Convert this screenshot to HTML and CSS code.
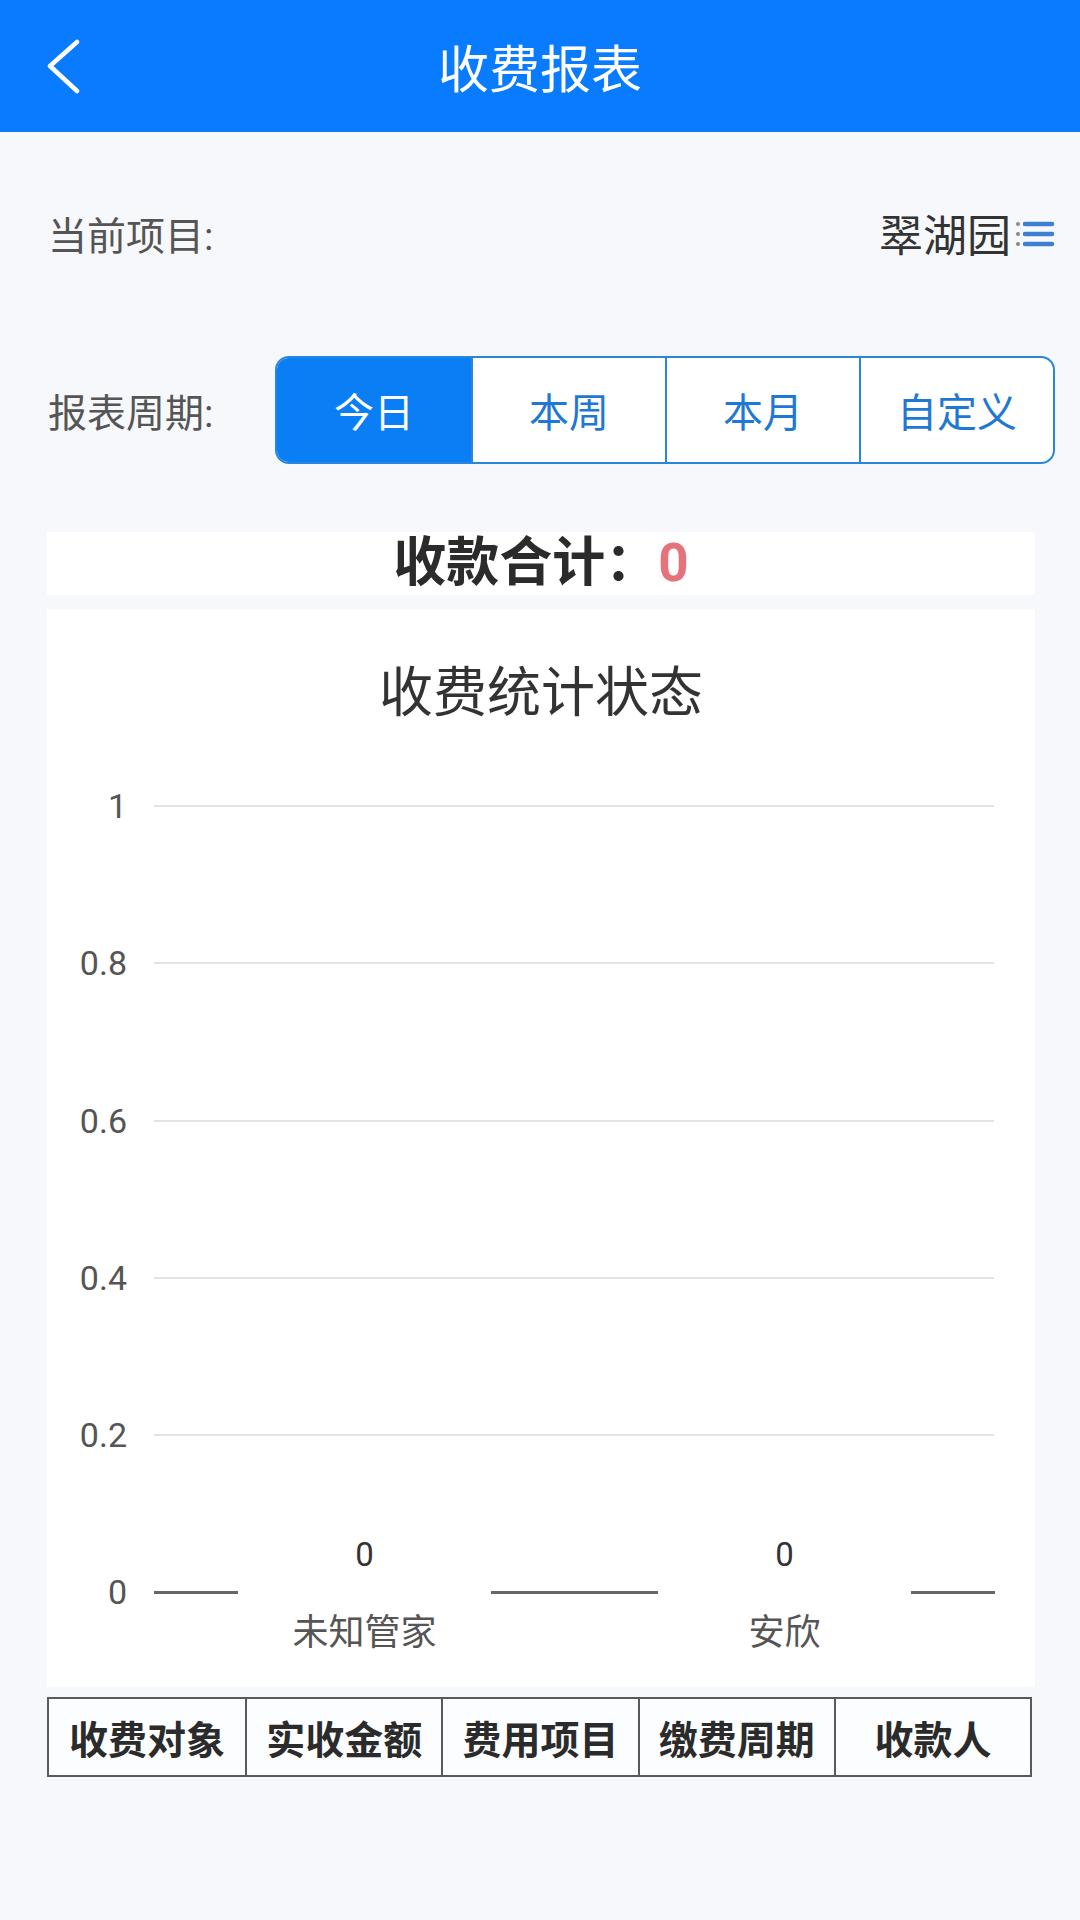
FILE: index.html
```html
<!DOCTYPE html>
<html lang="zh-CN">
<head>
    <meta charset="UTF-8">
    <meta name="viewport" content="width=device-width, initial-scale=1.0">
    <title>收费报表</title>
    <link rel="stylesheet" href="styles.css">
</head>
<body>
    <div class="header">
        <div class="back">
            <svg width="34" height="56" viewBox="0 0 34 56"><polyline points="30,3 3,27 30,52" fill="none" stroke="#fff" stroke-width="4.5" stroke-linecap="round" stroke-linejoin="round"/></svg>
        </div>
        <div class="title">收费报表</div>
        <div class="spacer"></div>
    </div>

    <div class="row project-row">
        <span class="label">当前项目:</span>
        <span class="project">翠湖园
            <svg class="menu-icon" width="40" height="28" viewBox="0 0 40 28"><circle cx="3" cy="4" r="2" fill="#888"/><circle cx="3" cy="14" r="2" fill="#888"/><circle cx="3" cy="24" r="2" fill="#888"/><line x1="10" y1="4" x2="37" y2="4" stroke="#3d7fd0" stroke-width="4.5" stroke-linecap="round"/><line x1="10" y1="14" x2="37" y2="14" stroke="#3d7fd0" stroke-width="4.5" stroke-linecap="round"/><line x1="10" y1="24" x2="37" y2="24" stroke="#3d7fd0" stroke-width="4.5" stroke-linecap="round"/></svg>
        </span>
    </div>

    <div class="row period-row">
        <span class="label">报表周期:</span>
        <div class="segments">
            <div class="seg active">今日</div>
            <div class="seg">本周</div>
            <div class="seg">本月</div>
            <div class="seg">自定义</div>
        </div>
    </div>

    <div class="summary">收款合计：<span class="total">0</span></div>

    <div class="chart">
        <div class="chart-title">收费统计状态</div>
        <div class="grid-row"><span class="ylabel">1</span><div class="gridline"></div></div>
        <div class="grid-row"><span class="ylabel">0.8</span><div class="gridline"></div></div>
        <div class="grid-row"><span class="ylabel">0.6</span><div class="gridline"></div></div>
        <div class="grid-row"><span class="ylabel">0.4</span><div class="gridline"></div></div>
        <div class="grid-row"><span class="ylabel">0.2</span><div class="gridline"></div></div>
        <div class="base-row">
            <span class="ylabel">0</span>
            <div class="axis">
                <div class="axis-seg edge"></div>
                <div class="bar-slot"><span class="value">0</span><span class="cat">未知管家</span></div>
                <div class="axis-seg middle"></div>
                <div class="bar-slot"><span class="value">0</span><span class="cat">安欣</span></div>
                <div class="axis-seg edge"></div>
            </div>
        </div>
    </div>

    <div class="table-head">
        <div class="th">收费对象</div>
        <div class="th">实收金额</div>
        <div class="th">费用项目</div>
        <div class="th">缴费周期</div>
        <div class="th">收款人</div>
    </div>
</body>
</html>
```

FILE: styles.css
```css
body {
    margin: 0;
    width: 1080px;
    min-height: 1920px;
    background: #f6f8fb;
    font-family: Roboto, "Noto Sans CJK SC", sans-serif;
    color: #333;
}
.header {
    height: 132px;
    background: #087bff;
    display: flex;
    align-items: center;
}
.back {
    width: 132px;
    padding-left: 47px;
    box-sizing: border-box;
    display: flex;
    align-items: center;
    padding-top: 2px;
}
.title {
    flex: 1;
    text-align: center;
    color: #fff;
    font-size: 51px;
}
.spacer {
    width: 132px;
}
.row {
    display: flex;
    align-items: center;
    justify-content: space-between;
    padding: 0 25px 0 48px;
}
.label {
    font-size: 39px;
    color: #555;
}
.project-row {
    margin-top: 58px;
    height: 86px;
}
.project {
    font-size: 44px;
    color: #333;
    display: flex;
    align-items: center;
}
.menu-icon {
    margin-left: 4px;
    margin-top: 2px;
}
.period-row {
    margin-top: 80px;
    height: 108px;
}
.segments {
    width: 780px;
    height: 108px;
    box-sizing: border-box;
    display: grid;
    grid-template-columns: repeat(4, 1fr);
    border: 2px solid #2a86d8;
    border-radius: 14px;
    overflow: hidden;
    background: #fff;
}
.seg {
    display: flex;
    align-items: center;
    justify-content: center;
    font-size: 40px;
    color: #1f79d2;
    border-left: 2px solid #2a86d8;
}
.seg:first-child {
    border-left: none;
}
.seg.active {
    background: #0a7ff5;
    color: #fff;
}
.summary {
    margin: 68px 45px 0 47px;
    height: 63px;
    background: #fff;
    text-align: center;
    font-size: 53px;
    font-weight: bold;
    line-height: 63px;
    color: #2b2b2b;
}
.total {
    color: #e5737c;
}
.chart {
    margin: 14px 45px 0 47px;
    height: 1078px;
    box-sizing: border-box;
    background: #fff;
    padding: 55px 41px 0 0;
}
.chart-title {
    text-align: center;
    font-size: 54px;
    line-height: 60px;
    color: #333;
    padding-left: 41px;
    margin-bottom: 62px;
}
.grid-row {
    display: flex;
    align-items: center;
    height: 40px;
    margin-bottom: 117.3px;
}
.grid-row:nth-of-type(6) {
    margin-bottom: 79px;
}
.ylabel {
    width: 80px;
    text-align: right;
    font-size: 34px;
    color: #555;
    margin-right: 27px;
    flex-shrink: 0;
}
.gridline {
    flex: 1;
    height: 2px;
    background: #e3e3e3;
}
.base-row {
    display: flex;
    align-items: center;
    height: 116px;
}
.axis {
    flex: 1;
    display: flex;
    align-items: center;
}
.axis-seg {
    height: 3px;
    background: #666;
}
.axis-seg.edge {
    width: 84px;
}
.axis-seg.middle {
    width: 167px;
}
.bar-slot {
    width: 253px;
    height: 116px;
    display: flex;
    flex-direction: column;
    justify-content: space-between;
    align-items: center;
}
.value {
    font-size: 33px;
    line-height: 42px;
    color: #333;
}
.cat {
    font-size: 36px;
    line-height: 34px;
    color: #555;
}
.table-head {
    margin: 10px 48px 0 47px;
    height: 80px;
    box-sizing: border-box;
    display: grid;
    grid-template-columns: repeat(5, 1fr);
    border: 2px solid #5a5a5a;
    background: #fcfdfe;
}
.th {
    display: flex;
    align-items: center;
    justify-content: center;
    font-size: 39px;
    font-weight: bold;
    color: #2b2b2b;
    border-left: 2px solid #5a5a5a;
}
.th:first-child {
    border-left: none;
}
```
